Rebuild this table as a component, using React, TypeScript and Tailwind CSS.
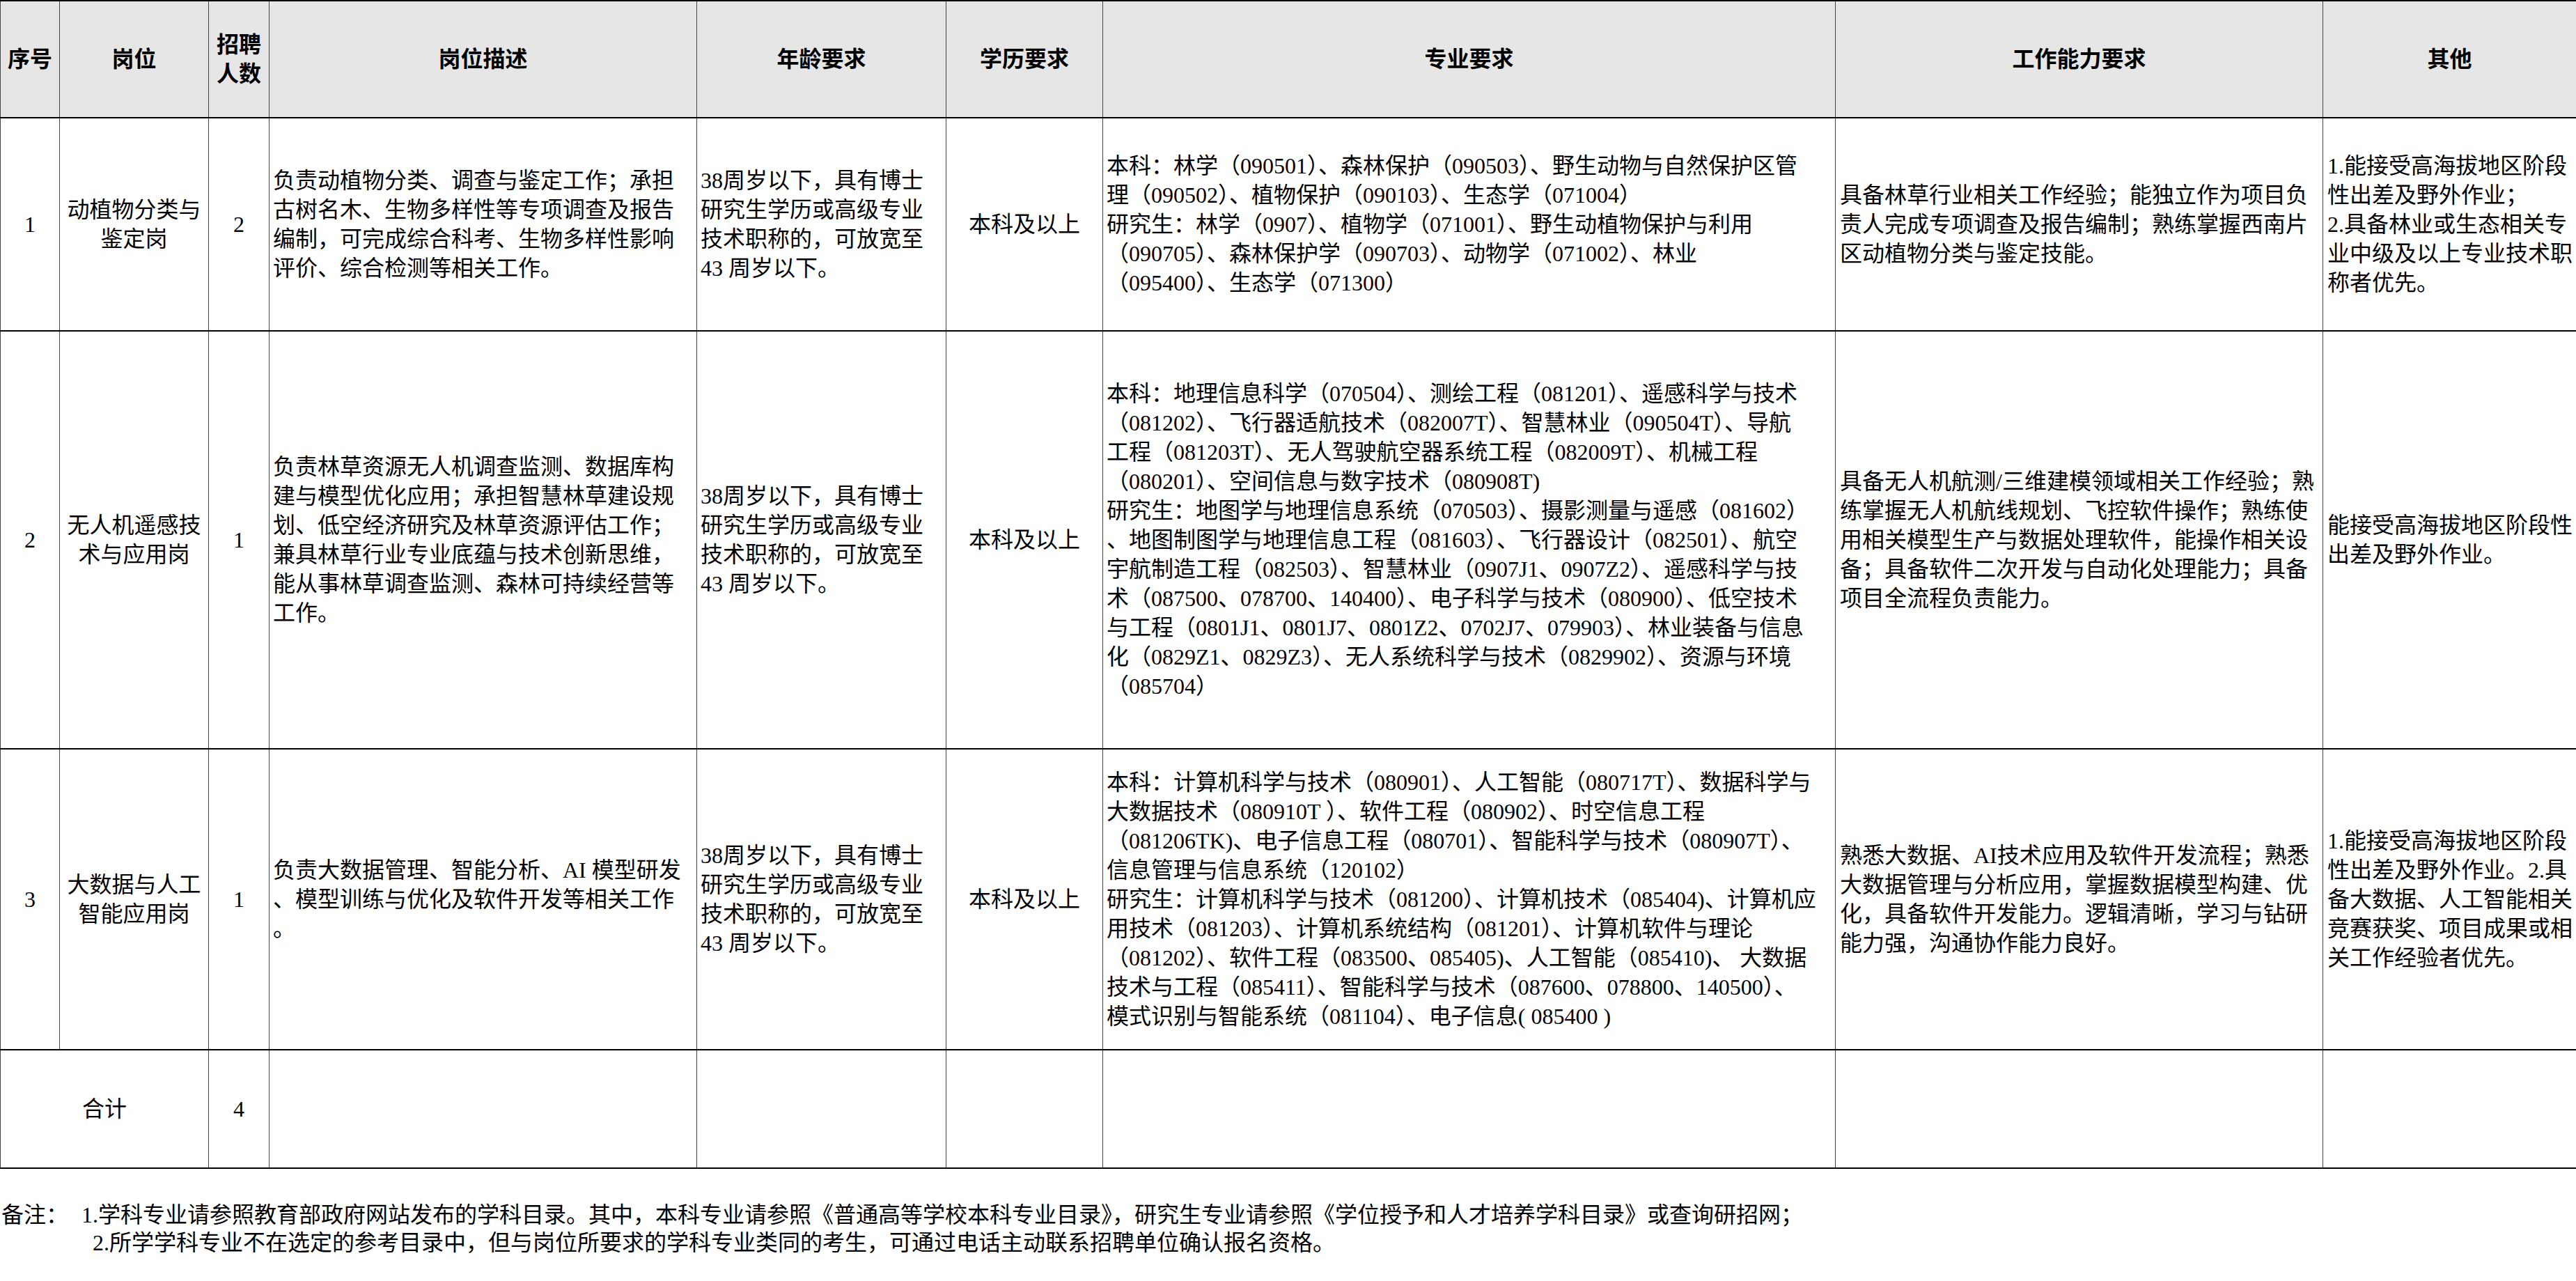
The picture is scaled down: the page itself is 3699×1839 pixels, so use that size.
import React from 'react';

const age = ['38周岁以下，具有博士', '研究生学历或高级专业', '技术职称的，可放宽至', '43 周岁以下。'];

const rows = [
  {
    no: '1',
    post: ['动植物分类与', '鉴定岗'],
    num: '2',
    height: 'h-[306px]',
    desc: [
      '负责动植物分类、调查与鉴定工作；承担',
      '古树名木、生物多样性等专项调查及报告',
      '编制，可完成综合科考、生物多样性影响',
      '评价、综合检测等相关工作。',
    ],
    major: [
      '本科：林学（090501）、森林保护（090503）、野生动物与自然保护区管',
      '理（090502）、植物保护（090103）、生态学（071004）',
      '研究生：林学（0907）、植物学（071001）、野生动植物保护与利用',
      '（090705）、森林保护学（090703）、动物学（071002）、林业',
      '（095400）、生态学（071300）',
    ],
    ability: [
      '具备林草行业相关工作经验；能独立作为项目负',
      '责人完成专项调查及报告编制；熟练掌握西南片',
      '区动植物分类与鉴定技能。',
    ],
    other: ['1.能接受高海拔地区阶段', '性出差及野外作业；', '2.具备林业或生态相关专', '业中级及以上专业技术职', '称者优先。'],
  },
  {
    no: '2',
    post: ['无人机遥感技', '术与应用岗'],
    num: '1',
    height: 'h-[600px]',
    desc: [
      '负责林草资源无人机调查监测、数据库构',
      '建与模型优化应用；承担智慧林草建设规',
      '划、低空经济研究及林草资源评估工作；',
      '兼具林草行业专业底蕴与技术创新思维，',
      '能从事林草调查监测、森林可持续经营等',
      '工作。',
    ],
    major: [
      '本科：地理信息科学（070504）、测绘工程（081201）、遥感科学与技术',
      '（081202）、飞行器适航技术（082007T）、智慧林业（090504T）、导航',
      '工程（081203T）、无人驾驶航空器系统工程（082009T）、机械工程',
      '（080201）、空间信息与数字技术（080908T)',
      '研究生：地图学与地理信息系统（070503）、摄影测量与遥感（081602）',
      '、地图制图学与地理信息工程（081603）、飞行器设计（082501）、航空',
      '宇航制造工程（082503）、智慧林业（0907J1、0907Z2）、遥感科学与技',
      '术（087500、078700、140400）、电子科学与技术（080900）、低空技术',
      '与工程（0801J1、0801J7、0801Z2、0702J7、079903）、林业装备与信息',
      '化（0829Z1、0829Z3）、无人系统科学与技术（0829902）、资源与环境',
      '（085704）',
    ],
    ability: [
      '具备无人机航测/三维建模领域相关工作经验；熟',
      '练掌握无人机航线规划、飞控软件操作；熟练使',
      '用相关模型生产与数据处理软件，能操作相关设',
      '备；具备软件二次开发与自动化处理能力；具备',
      '项目全流程负责能力。',
    ],
    other: ['能接受高海拔地区阶段性', '出差及野外作业。'],
  },
  {
    no: '3',
    post: ['大数据与人工', '智能应用岗'],
    num: '1',
    height: 'h-[432px]',
    desc: ['负责大数据管理、智能分析、AI 模型研发', '、模型训练与优化及软件开发等相关工作', '。'],
    major: [
      '本科：计算机科学与技术（080901）、人工智能（080717T）、数据科学与',
      '大数据技术（080910T ）、软件工程（080902）、时空信息工程',
      '（081206TK)、电子信息工程（080701）、智能科学与技术（080907T）、',
      '信息管理与信息系统（120102）',
      '研究生：计算机科学与技术（081200）、计算机技术（085404)、计算机应',
      '用技术（081203）、计算机系统结构（081201）、计算机软件与理论',
      '（081202）、软件工程（083500、085405)、人工智能（085410)、 大数据',
      '技术与工程（085411）、智能科学与技术（087600、078800、140500）、',
      '模式识别与智能系统（081104）、电子信息( 085400 )',
    ],
    ability: [
      '熟悉大数据、AI技术应用及软件开发流程；熟悉',
      '大数据管理与分析应用，掌握数据模型构建、优',
      '化，具备软件开发能力。逻辑清晰，学习与钻研',
      '能力强，沟通协作能力良好。',
    ],
    other: ['1.能接受高海拔地区阶段', '性出差及野外作业。2.具', '备大数据、人工智能相关', '竞赛获奖、项目成果或相', '关工作经验者优先。'],
  },
];

const Lines = ({ lines }: { lines: string[] }) => (
  <>
    {lines.map((l, i) => (
      <div key={i} className="whitespace-pre">
        {l}
      </div>
    ))}
  </>
);

const cell = 'border-x border-y-2 border-x-[#444] border-y-black align-middle p-0';

const App = () => {
  return (
    <div className="w-[3699px] h-[1839px] bg-white text-black font-['Liberation_Serif','Noto_Sans_CJK_SC',serif] text-[32px] leading-[42px] overflow-hidden">
      <table className="table-fixed border-collapse w-[3699px]">
        <colgroup>
          <col className="w-[85px]" />
          <col className="w-[214px]" />
          <col className="w-[87px]" />
          <col className="w-[614px]" />
          <col className="w-[358px]" />
          <col className="w-[225px]" />
          <col className="w-[1052px]" />
          <col className="w-[700px]" />
          <col className="w-[364px]" />
        </colgroup>
        <thead>
          <tr className="h-[168px] bg-[#e6e6e6] font-bold text-center">
            <td className={cell}>序号</td>
            <td className={cell}>岗位</td>
            <td className={cell}>
              <div>招聘</div>
              <div>人数</div>
            </td>
            <td className={cell}>岗位描述</td>
            <td className={cell}>年龄要求</td>
            <td className={cell}>学历要求</td>
            <td className={cell}>专业要求</td>
            <td className={cell}>工作能力要求</td>
            <td className={`${cell} border-r-[#888]`}>其他</td>
          </tr>
        </thead>
        <tbody>
          {rows.map((r) => (
            <tr key={r.no} className={r.height}>
              <td className={`${cell} text-center`}>{r.no}</td>
              <td className={`${cell} text-center`}>
                <Lines lines={r.post} />
              </td>
              <td className={`${cell} text-center`}>{r.num}</td>
              <td className={`${cell} px-[5px]`}>
                <Lines lines={r.desc} />
              </td>
              <td className={`${cell} px-[5px]`}>
                <Lines lines={age} />
              </td>
              <td className={`${cell} text-center`}>本科及以上</td>
              <td className={`${cell} px-[5px]`}>
                <Lines lines={r.major} />
              </td>
              <td className={`${cell} px-[6px]`}>
                <Lines lines={r.ability} />
              </td>
              <td className={`${cell} px-[6px] border-r-[#888]`}>
                <Lines lines={r.other} />
              </td>
            </tr>
          ))}
          <tr className="h-[170px]">
            <td className={`${cell} text-center`} colSpan={2}>
              合计
            </td>
            <td className={`${cell} text-center`}>4</td>
            <td className={cell}></td>
            <td className={cell}></td>
            <td className={cell}></td>
            <td className={cell}></td>
            <td className={cell}></td>
            <td className={`${cell} border-r-[#888]`}></td>
          </tr>
        </tbody>
      </table>

      <div className="pt-[46px] leading-[40px] whitespace-pre">
        <div className="pl-[2px]">
          <span className="inline-block w-[115px]">备注：</span>
          1.学科专业请参照教育部政府网站发布的学科目录。其中，本科专业请参照《普通高等学校本科专业目录》，研究生专业请参照《学位授予和人才培养学科目录》或查询研招网；
        </div>
        <div className="pl-[133px]">
          2.所学学科专业不在选定的参考目录中，但与岗位所要求的学科专业类同的考生，可通过电话主动联系招聘单位确认报名资格。
        </div>
      </div>
    </div>
  );
};

export default App;
